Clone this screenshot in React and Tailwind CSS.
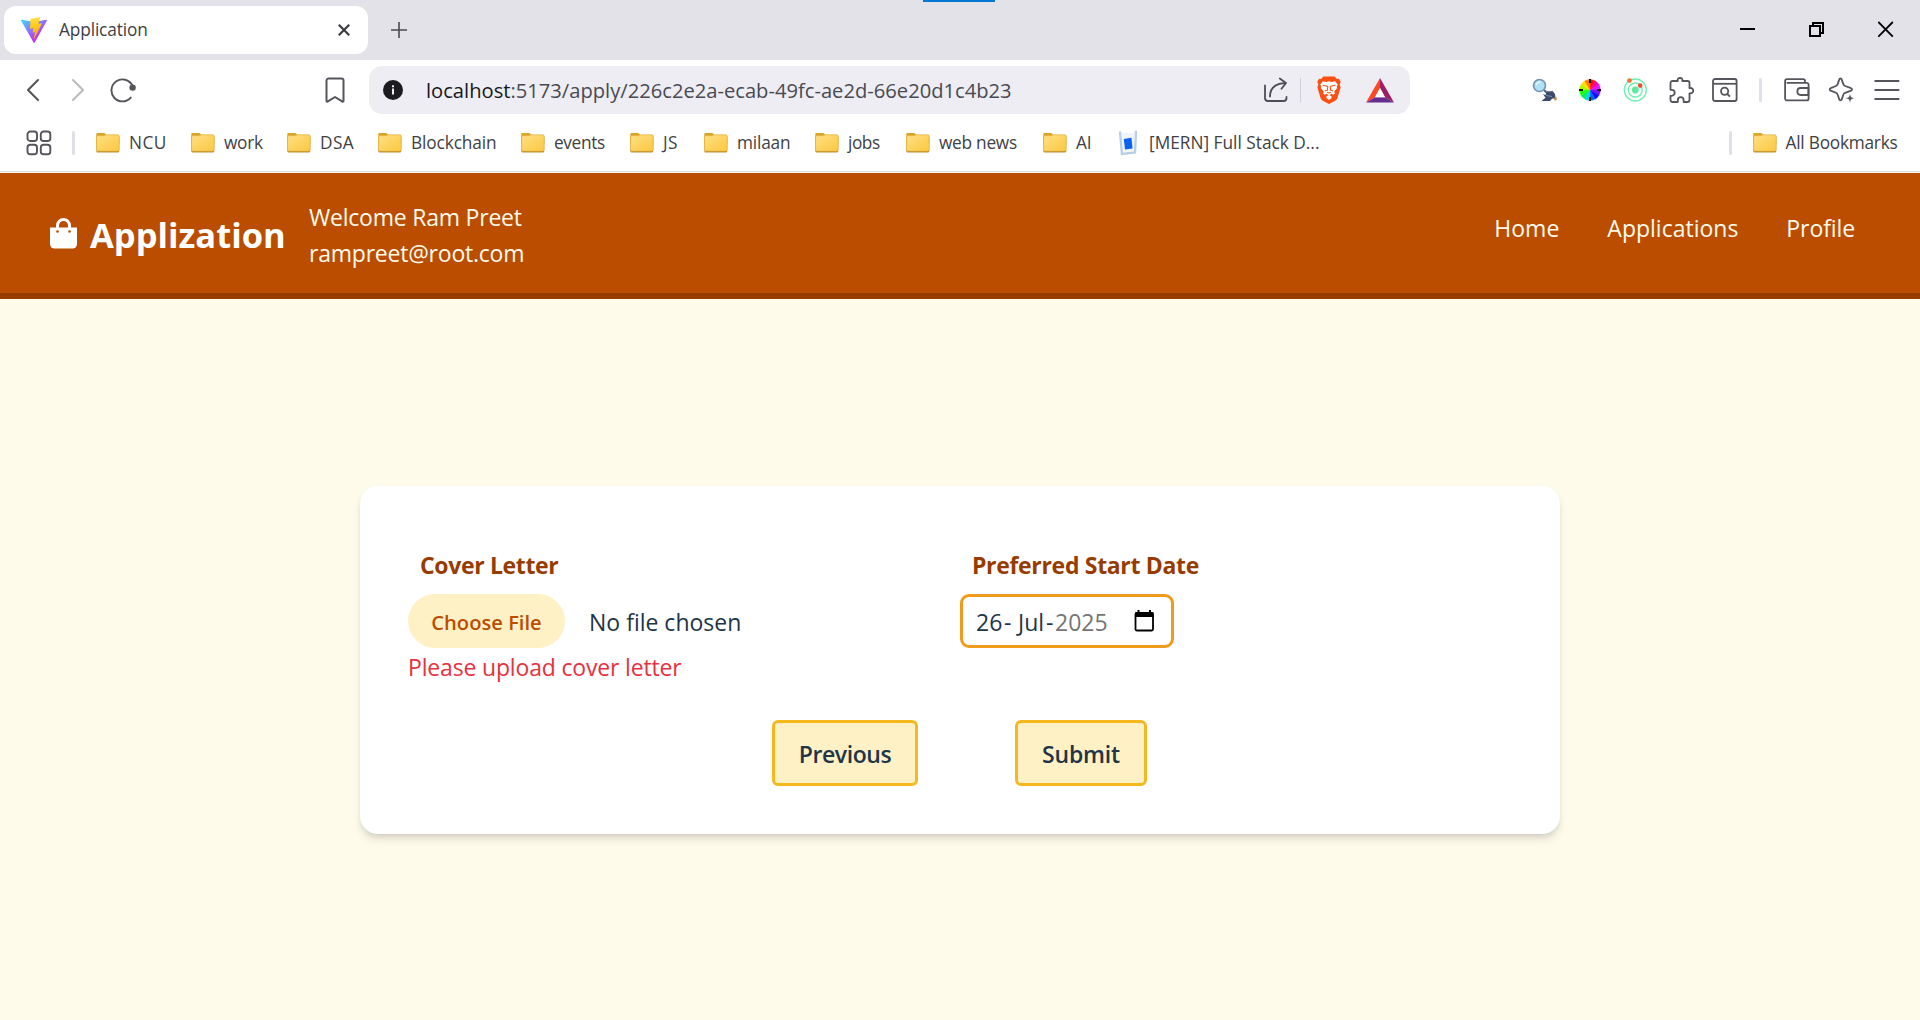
import React from 'react';

function Folder() {
  return (
    <svg width="24" height="22" viewBox="0 0 24 22" className="shrink-0">
      <defs>
        <linearGradient id="folder" x1="0" y1="0" x2="1" y2="1">
          <stop offset="0" stopColor="#ffe084" />
          <stop offset="1" stopColor="#fbc840" />
        </linearGradient>
      </defs>
      <path d="M1.5 1h6.8l2 1.800H22c.8 0 1.300.5 1.300 1.200V12H.3V2.200C.3 1.500.8 1 1.500 1z" fill="#d9a528" />
      <rect x=".3" y="4" width="23" height="16.600" rx="1.600" fill="#bf9230" />
      <path d="M.6 5.200c0-1 .6-1.500 1.500-1.500h5.600L10 2.900h11.700c.9 0 1.400.5 1.400 1.400v13.400c0 .9-.5 1.400-1.400 1.400H2.100c-.9 0-1.500-.5-1.500-1.400z" fill="url(#folder)" stroke="#e3b23c" strokeWidth=".6" />
    </svg>
  );
}

function ViteLogo() {
  return (
    <svg width="26" height="26" viewBox="0 0 256 257" className="shrink-0">
      <defs>
        <linearGradient id="viteA" x1="-.8%" x2="57.6%" y1="7.7%" y2="78.4%">
          <stop offset="0" stopColor="#41D1FF" />
          <stop offset="1" stopColor="#BD34FE" />
        </linearGradient>
        <linearGradient id="viteB" x1="43.4%" x2="50.3%" y1="2.2%" y2="89%">
          <stop offset="0" stopColor="#FFEA83" />
          <stop offset=".083" stopColor="#FFDD35" />
          <stop offset="1" stopColor="#FFA800" />
        </linearGradient>
      </defs>
      <path fill="url(#viteA)" d="M255.153 37.938L134.897 252.976c-2.483 4.44-8.862 4.466-11.382.048L.875 37.958c-2.746-4.814 1.371-10.646 6.827-9.67l120.385 21.517a6.537 6.537 0 0 0 2.322-.004l117.867-21.483c5.438-.991 9.574 4.796 6.877 9.62Z" />
      <path fill="url(#viteB)" d="M185.432.063L96.44 17.501a3.268 3.268 0 0 0-2.634 3.014l-5.474 92.456a3.268 3.268 0 0 0 3.997 3.378l24.777-5.718c2.318-.535 4.413 1.507 3.936 3.838l-7.361 36.047c-.495 2.426 1.782 4.5 4.151 3.78l15.304-4.649c2.372-.72 4.652 1.36 4.15 3.788l-11.698 56.621c-.732 3.542 3.979 5.473 5.943 2.437l1.313-2.028l72.516-144.72c1.215-2.423-.88-5.186-3.54-4.672l-25.505 4.922c-2.396.462-4.435-1.77-3.759-4.114l16.646-57.705c.677-2.35-1.37-4.583-3.769-4.113Z" />
    </svg>
  );
}

function TabStrip() {
  return (
    <div className="flex h-[60px] items-start bg-[#e3e2e9]">
      <div className="ml-1 mt-1.5 flex h-12 w-[364px] items-center rounded-[12px] bg-white pl-[17px]">
        <ViteLogo />
        <span className="-mt-[1px] ml-[12px] w-[278.500px] text-[17.28px] leading-6 tracking-[-0.13px] text-[#3f3f46]">Application</span>
        <svg width="12" height="12" viewBox="0 0 12 12" stroke="#3b3b40" strokeWidth="2.2">
          <path d="M.8.8l10.4 10.4M11.2.8L.8 11.2" />
        </svg>
      </div>
      <svg className="ml-[23px] mt-[22px]" width="16" height="16" viewBox="0 0 16 16" stroke="#4a4a50" strokeWidth="1.6">
        <path d="M0 8h16M8 0v16" />
      </svg>
      <div className="ml-[516px] h-0.5 w-[72px] bg-[#0078d4]" />
      <div className="ml-auto mr-[26px] mt-[21px] flex items-center gap-[53px]">
        <svg width="16" height="17" viewBox="0 0 16 17"><path d="M0 8h15" stroke="#000" strokeWidth="2" /></svg>
        <svg width="16" height="17" viewBox="0 0 16 17" fill="none" stroke="#000" strokeWidth="2">
          <path d="M1 5h10v10H1zM4 5V2h10v10h-3" />
        </svg>
        <svg width="16" height="17" viewBox="0 0 16 17" stroke="#000" strokeWidth="1.8"><path d="M.3 1l14.500 14.700M14.800 1L.3 15.700" /></svg>
      </div>
    </div>
  );
}

function ColorWheel() {
  const colors = ['#ff1010', '#ff00a8', '#e010ff', '#7a10ff', '#1010ff', '#0060ff', '#00d8e8', '#00f060', '#20ff10', '#a0ff00', '#ffe000', '#ff8000'];
  return (
    <svg width="24" height="24" viewBox="-12 -12 24 24">
      {colors.map((c, i) => (
        <path key={c} d="M0 0L0-10.5A10.5 10.5 0 0 1 5.500-8.950z" fill={c} stroke={c} strokeWidth=".3" transform={`rotate(${i * 30})`} />
      ))}
      <path d="M0-11v4M0 7v4M-11 0h4M7 0h4" stroke="#111" strokeWidth="2" />
    </svg>
  );
}

function Extensions() {
  return (
    <div className="flex items-center">
      <svg className="ml-[122px]" width="26" height="24" viewBox="0 0 26 24">
        <path d="M12 12l5 5" stroke="#49658a" strokeWidth="2" />
        <circle cx="7.500" cy="7.500" r="6" fill="#aee0f8" stroke="#7592a8" strokeWidth="1.600" />
        <path d="M4.500 7a3.500 3.500 0 0 1 4-3" stroke="#e6f7ff" strokeWidth="1.400" fill="none" />
        <path d="M11 16l2.500 1 2-4 1.700.5 3.300-.5 2.500 3 .6 4.300-3.600.5L18 23H9.500l4-3.200z" fill="#3d4a6c" />
        <path d="M14 17.500l6 1" stroke="#7890b4" strokeWidth="1.200" />
        <path d="M21.500 20l3-1 .4 3-2.400.6z" fill="#bd8c58" />
      </svg>
      <div className="ml-[20px]"><ColorWheel /></div>
      <svg className="ml-[21px]" width="25" height="24" viewBox="0 0 25 24" fill="none">
        <circle cx="12.300" cy="12" r="11" stroke="#6eeeb0" strokeWidth="1.300" />
        <circle cx="12.300" cy="12" r="7" stroke="#6eeeb0" strokeWidth="1.300" />
        <circle cx="12.300" cy="12" r="3.400" fill="#5ceaa0" />
        <circle cx="6.500" cy="2.600" r="2.400" fill="#f2733c" />
        <circle cx="17.200" cy="7.600" r="2.300" fill="#ec4f32" />
      </svg>
      <svg className="ml-[20px]" width="27" height="27" viewBox="0 0 27 27" fill="none" stroke="#55555c" strokeWidth="1.800" strokeLinejoin="round">
        <path d="M4.500 4h5.300C9.200 1.900 10.500 1 12 1s2.900.9 2.300 3h5.200a2 2 0 0 1 2 2v5.100c2.200-.5 3.800.9 3.800 2.600s-1.600 3.100-3.800 2.600V23a2 2 0 0 1-2 2h-3.900v-1.800c0-1.700-1.200-3-2.900-3s-2.900 1.300-2.900 3V25H4.500a2 2 0 0 1-2-2v-4.200h1.200c1.700 0 3-1.300 3-3s-1.300-3-3-3H2.500V6a2 2 0 0 1 2-2z" />
      </svg>
      <svg className="ml-[17px]" width="26" height="24" viewBox="0 0 26 24" fill="none" stroke="#55555c" strokeWidth="1.800">
        <rect x="1" y="1" width="23.600" height="22" rx="2" />
        <path d="M1 5.800h23.600" />
        <circle cx="12.600" cy="13.200" r="3.600" />
        <path d="M15.300 16l2.700 2.600" />
      </svg>
      <div className="ml-[21px] h-[24px] w-[3px] rounded bg-[#e1e0e8]" />
      <svg className="ml-[22px]" width="26" height="24" viewBox="0 0 26 24" fill="none" stroke="#55555c" strokeWidth="1.800" strokeLinejoin="round">
        <path d="M21 4.800V3a1.800 1.800 0 0 0-1.800-1.800H3A1.900 1.900 0 0 0 1.100 3v17.400a2 2 0 0 0 2 2h19.500a2 2 0 0 0 2-2V6.800a2 2 0 0 0-2-2H2.600" />
        <path d="M24.400 10h-7.800a3.200 3.200 0 0 0-3.200 3.200v.6a3.200 3.200 0 0 0 3.200 3.200h7.800z" />
      </svg>
      <svg className="ml-[19px]" width="26" height="26" viewBox="0 0 26 26" fill="none" stroke="#55555c" strokeWidth="1.800" strokeLinejoin="round">
        <path d="M11.500 1.500c.7 0 1.100.4 1.300 1.100l1.500 4.500c.3 1 .9 1.500 1.800 1.900l5.900 2.200c1.300.6 1.300 1.800 0 2.400l-5.900 2.200c-.9.4-1.500.9-1.800 1.900l-1.500 4.600c-.4 1.400-2.200 1.400-2.600 0l-1.500-4.600c-.3-1-.9-1.500-1.800-1.900l-5.200-2.200c-1.300-.6-1.300-1.800 0-2.400L6.900 9c.9-.4 1.500-.9 1.800-1.900l1.500-4.500c.2-.7.6-1.100 1.300-1.100z" />
        <path d="M21 16.500l1.300 3.400 3.400 1.300-3.400 1.300L21 26l-1.300-3.500-3.400-1.300 3.400-1.300z" fill="#55555c" stroke="#fff" strokeWidth=".6" />
      </svg>
      <svg className="ml-[19px]" width="26" height="22" viewBox="0 0 26 22" stroke="#55555c" strokeWidth="1.800">
        <path d="M.5 2h24.800M.5 11h24.800M.5 20h24.800" />
      </svg>
    </div>
  );
}

function Toolbar() {
  return (
    <div className="flex h-[60px] items-center bg-white">
      <svg className="ml-[26px]" width="14" height="24" viewBox="0 0 14 24" fill="none" stroke="#55555c" strokeWidth="2.100" strokeLinecap="round" strokeLinejoin="round"><path d="M12 2L2 12l10 10" /></svg>
      <svg className="ml-[31px]" width="14" height="24" viewBox="0 0 14 24" fill="none" stroke="#bbbbc0" strokeWidth="2.100" strokeLinecap="round" strokeLinejoin="round"><path d="M2 2l10 10L2 22" /></svg>
      <svg className="ml-[25px]" width="27" height="25" viewBox="0 0 27 25" fill="none" stroke="#55555c" strokeWidth="1.900" strokeLinecap="round">
        <path d="M22.300 7.500A11 11 0 1 0 20.800 19.600" />
        <circle cx="22.600" cy="9.600" r="3.200" fill="#55555c" stroke="none" />
      </svg>
      <svg className="ml-[188px]" width="20" height="26" viewBox="0 0 20 26" fill="none" stroke="#55555c" strokeWidth="2" strokeLinejoin="round">
        <path d="M1.500 3.500a2 2 0 0 1 2-2h13a2 2 0 0 1 2 2v20.200c0 1-.8 1.200-1.400.7L10 20l-7.100 4.400c-.6.5-1.400.3-1.400-.7z" />
      </svg>
      <div className="ml-[24px] flex h-12 w-[1041px] items-center rounded-[13px] bg-[#ededf3]">
        <svg className="ml-[14px]" width="20" height="20" viewBox="0 0 20 20">
          <circle cx="10" cy="10" r="10" fill="#1b1b20" />
          <path d="M10 8.600v6M10 5.200v2" stroke="#ededf3" strokeWidth="2" />
        </svg>
        <span className="ml-[23px] w-[838px] whitespace-nowrap text-[20.160px] leading-7 text-[#4a4a52]"><span className="text-[#17171c]">localhost</span>:5173/apply/226c2e2a-ecab-49fc-ae2d-66e20d1c4b23</span>
        <svg width="24" height="26" viewBox="0 0 24 26" fill="none" stroke="#4d4d55" strokeWidth="1.800" strokeLinecap="round" strokeLinejoin="round">
          <path d="M1 8.500V21a3 3 0 0 0 3 3h15.500a3 3 0 0 0 3-3v-1" />
          <path d="M6 19.500c0-8 4-13 15.500-13.500M15.800 1.500L22 6l-4.500 5.800" />
        </svg>
        <div className="ml-[12px] h-6 w-px bg-[#cfced6]" />
        <svg className="ml-[16px]" width="24" height="28" viewBox="0 0 24 28">
          <path d="M6.300.5h11.400l2.200 2.600 2-.3 1.800 3-1 2.600.9 3.100-3.100 10.300c-.4 1.300-1.200 2.200-2.200 2.900L12 28l-6.300-3.300c-1-.7-1.800-1.600-2.200-2.900L.4 11.500l.9-3.100-1-2.600 1.800-3 2 .3z" fill="#fb4f14" />
          <path d="M12 5.300l2.800.6 3.500-.7 2.500 3.500-1 1.600.4 1.600-3 3.600.7 2-1.700 1.300-2-1-1.700 1.300 2.300 1.700-.5 1.400L12 24l-2.300-1.800-.5-1.400 2.300-1.700-1.700-1.300-2 1L6.100 17.500l.7-2-3-3.600.4-1.600-1-1.600 2.500-3.500 3.500.7z" fill="#fff" />
          <path d="M5.700 9.300l4.400.9.700.8-.5 3.200-2.200.6M18.300 9.300l-4.400.9-.7.8.5 3.200 2.200.6M10 16.200l2 .8 2-.8" stroke="#fb4f14" strokeWidth="1.100" fill="none" />
        </svg>
        <svg className="ml-[25px]" width="28" height="25" viewBox="0 0 28 25">
          <path d="M14 0L0 24.500l9-5.300L14 10z" fill="#ff4724" />
          <path d="M14 0l14 24.500-9-5.300L14 10z" fill="#9e1f63" />
          <path d="M0 24.500h28l-9-5.300H9z" fill="#662d91" />
          <path d="M14 10l5 9.200H9z" fill="#fff" />
        </svg>
      </div>
      <Extensions />
    </div>
  );
}

const bookmarks = [
  { name: 'NCU', box: 'w-[95px]', text: 'tracking-[0.4px]' },
  { name: 'work', box: 'w-[96px]', text: 'tracking-[-0.27px]' },
  { name: 'DSA', box: 'w-[91px]', text: 'tracking-[0.4px]' },
  { name: 'Blockchain', box: 'w-[143px]', text: 'tracking-[-0.12px]' },
  { name: 'events', box: 'w-[109px]', text: 'tracking-[-0.35px]' },
  { name: 'JS', box: 'w-[74px]', text: 'tracking-[0.3px]' },
  { name: 'milaan', box: 'w-[111px]', text: 'tracking-[-0.18px]' },
  { name: 'jobs', box: 'w-[91px]', text: 'tracking-[-0.44px]' },
  { name: 'web news', box: 'w-[137px]', text: 'tracking-[-0.26px]' },
  { name: 'AI', box: 'w-[76px]', text: 'tracking-[-0.1px]' },
];

function BookmarksBar() {
  return (
    <div className="flex h-[52px] items-start whitespace-nowrap border-b border-[#dddbd8] bg-white text-[17.280px] leading-6 text-[#3f3f46]">
      <div className="flex h-[46px] w-full items-center">
        <svg className="ml-[26px]" width="26" height="26" viewBox="0 0 26 26" fill="none" stroke="#55555c" strokeWidth="1.900">
          <rect x="1.500" y="1.500" width="9.500" height="9.500" rx="2.800" />
          <rect x="14.800" y="1.500" width="9.500" height="9.500" rx="2.800" />
          <rect x="1.500" y="14.800" width="9.500" height="9.500" rx="2.800" />
          <rect x="14.800" y="14.800" width="9.500" height="9.500" rx="2.800" />
        </svg>
        <div className="ml-5 mr-[21px] h-6 w-[3px] rounded bg-[#e1e0e8]" />
        {bookmarks.map((b) => (
          <div key={b.name} className={`flex shrink-0 items-center gap-[9px] ${b.box}`}>
            <Folder />
            <span className={`-mt-px ${b.text}`}>{b.name}</span>
          </div>
        ))}
        <svg width="18" height="26" viewBox="0 0 18 26">
          <path d="M1 1.500l2 22.500 13-1.500L17 .8" fill="none" stroke="#b9cfe6" strokeWidth="2.400" />
          <path d="M3 3l1.500 19 10-1L15.500 3z" fill="#edf4fb" />
          <path d="M4.800 9l7.600-1.200 1.200 10.800-7.600 1z" fill="#0b63f0" />
        </svg>
        <span className="-mt-px ml-[12px] tracking-[0px]">[MERN] Full Stack D...</span>
        <div className="ml-auto mr-[21px] h-6 w-[3px] rounded bg-[#e1e0e8]" />
        <Folder />
        <span className="-mt-px ml-[9px] mr-[22.500px] tracking-[-0.24px]">All Bookmarks</span>
      </div>
    </div>
  );
}

function SiteHeader() {
  return (
    <header className="mt-px flex h-[126px] items-start border-b-[6px] border-[#973c00] bg-[#bb4d00] text-[23px] leading-9 text-[#fffbeb]">
      <svg className="ml-[50px] mt-[44px]" width="27" height="32" viewBox="0 0 27 32">
        <path d="M7.500 12V8.500a6 6 0 0 1 12 0V12" fill="none" stroke="#fff" strokeWidth="3" />
        <path d="M0 10.500h27V27a4.500 4.500 0 0 1-4.500 4.500h-18A4.500 4.500 0 0 1 0 27z" fill="#fff" />
        <circle cx="7.500" cy="14.500" r="1.300" fill="#bb4d00" />
        <circle cx="19.500" cy="14.500" r="1.300" fill="#bb4d00" />
      </svg>
      <h1 className="ml-[13px] mt-[35px] w-[219px] text-[34.500px] font-bold leading-[54px] text-white">Applization</h1>
      <div className="mt-[26px]">
        <p className="tracking-[-0.220px]">Welcome Ram Preet</p>
        <p className="tracking-[-0.220px]">rampreet@root.com</p>
      </div>
      <nav className="ml-auto mr-[65px] mt-[37px] flex gap-[48px]">
        <span>Home</span>
        <span>Applications</span>
        <span className="tracking-[-0.100px]">Profile</span>
      </nav>
    </header>
  );
}

function ApplyForm() {
  return (
    <section className="mx-auto h-[348px] w-[1200px] rounded-[18px] bg-white px-12 pt-[61px] text-[23px] leading-9 text-[#213547] shadow-[0_6px_9px_-1.500px_rgba(0,0,0,0.12),0_3px_6px_-3px_rgba(0,0,0,0.12)]">
      <div className="grid grid-cols-2">
        <div>
          <div className="ml-[12px] font-bold tracking-[-0.350px] text-[#973c00]">Cover Letter</div>
          <div className="mt-[11px] flex h-[54px] items-center">
            <span className="flex h-[54px] w-[157px] items-center justify-center rounded-full bg-[#fef1c6] pt-0.5 text-[20.160px] font-semibold text-[#bb4d00]">Choose File</span>
            <span className="ml-[24px] pt-0.5">No file chosen</span>
          </div>
          <p className="mt-px tracking-[-0.170px] text-[#e5323f]">Please upload cover letter</p>
        </div>
        <div>
          <div className="ml-[12px] font-bold tracking-[-0.320px] text-[#973c00]">Preferred Start Date</div>
          <div className="mt-[11px] flex h-[54px] w-[214px] items-center rounded-[9px] border-[3px] border-[#f09b1c] pl-[13px]">
            <span className="flex pt-0.5">
              <span className="w-[28px]">26</span>
              <span className="w-[14px]">-</span>
              <span className="w-[28px]">Jul</span>
              <span className="w-[9px]">-</span>
              <span className="w-[79px] text-[#757575]">2025</span>
            </span>
            <svg width="21" height="22" viewBox="0 0 21 22">
              <path d="M4.500 0v4M16 0v4" stroke="#000" strokeWidth="2" />
              <rect x="1.500" y="3" width="17.500" height="17.500" rx="1.200" fill="none" stroke="#000" strokeWidth="1.800" />
              <path d="M1 2.500h18.500v4.500H1z" fill="#000" />
            </svg>
          </div>
        </div>
      </div>
      <div className="mr-px mt-[35px] flex justify-center gap-[97px] font-semibold">
        <button className="h-[66px] w-[146px] rounded-[6px] border-[3px] border-[#f5b81d] bg-[#fef1c6] pt-0.5 tracking-[-0.400px]">Previous</button>
        <button className="h-[66px] w-[132px] rounded-[6px] border-[3px] border-[#f5b81d] bg-[#fef1c6] pt-0.5 tracking-[-0.210px]">Submit</button>
      </div>
    </section>
  );
}

export default function App() {
  return (
    <div className="h-[1020px] w-[1920px] overflow-hidden bg-[#fffbeb] font-['Open_Sans','Noto_Sans',sans-serif]">
      <TabStrip />
      <Toolbar />
      <BookmarksBar />
      <SiteHeader />
      <main className="pt-[187px]">
        <ApplyForm />
      </main>
    </div>
  );
}
